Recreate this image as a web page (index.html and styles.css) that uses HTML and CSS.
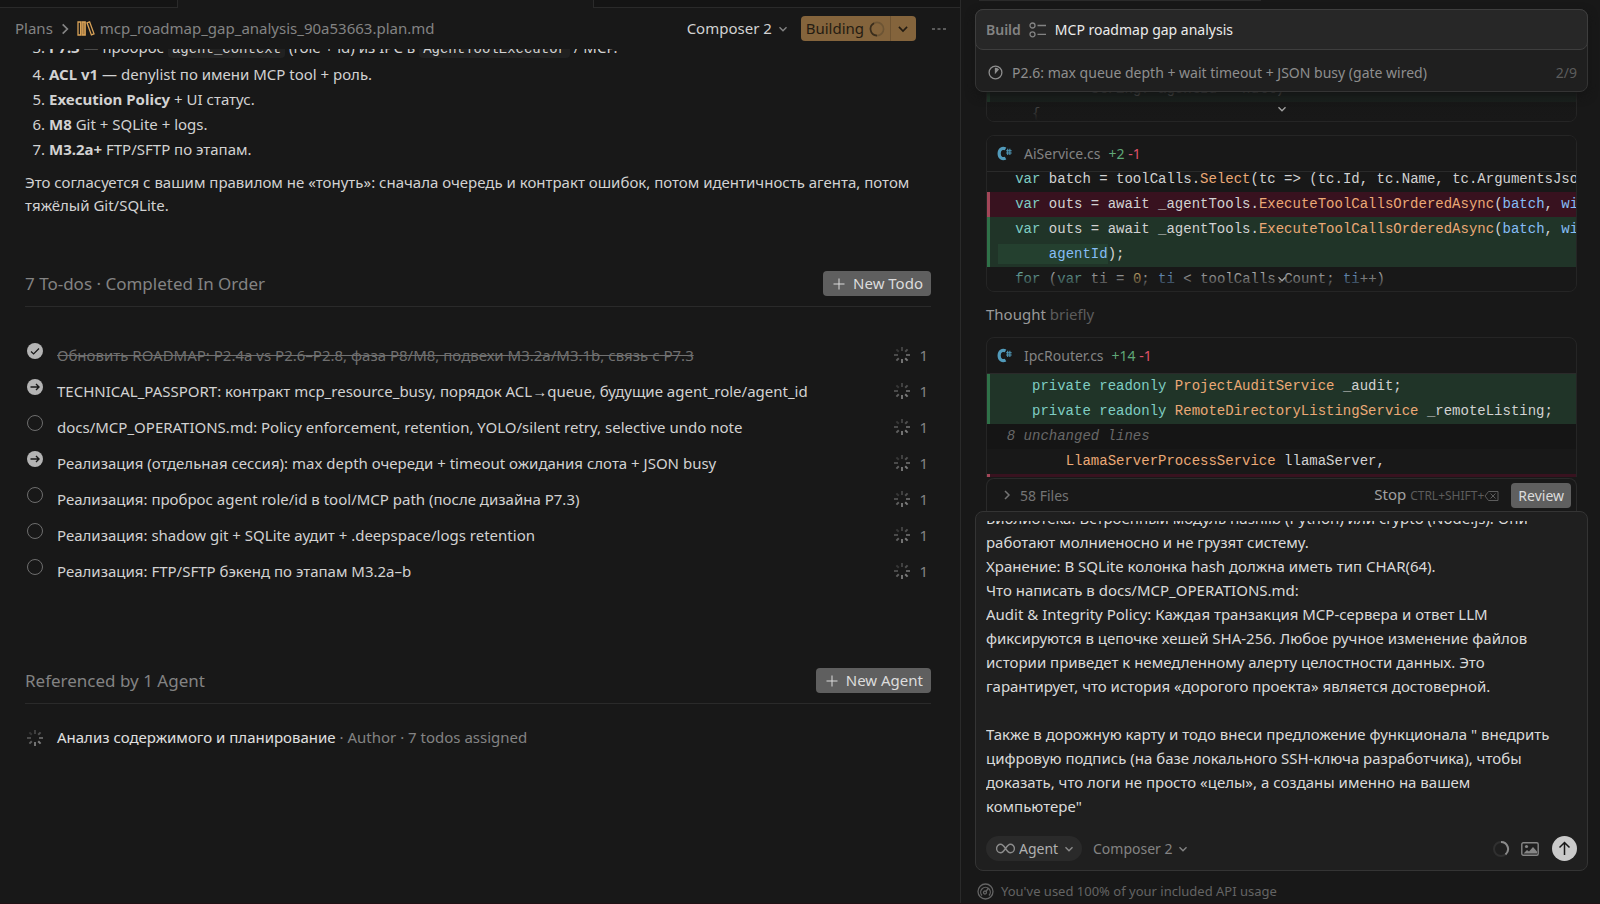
FILE: index.html
```html
<!DOCTYPE html>
<html lang="ru">
<head>
  <meta charset="UTF-8" />
  <meta name="viewport" content="width=device-width, initial-scale=1.0" />
  <title>mcp_roadmap_gap_analysis_90a53663.plan.md</title>
  <link rel="stylesheet" href="styles.css">
</head>
<body>
  <!-- shared icons -->
  <svg class="sprite" aria-hidden="true">
    <symbol id="chevron-down" viewBox="0 0 12 12"><path d="M2.500 4.200l3.500 3.500 3.500-3.500" fill="none" stroke="currentColor" stroke-width="1.4"/></symbol>
    <symbol id="chevron-right" viewBox="0 0 12 12"><path d="M4 2l4 4-4 4" fill="none" stroke="currentColor" stroke-width="1.5"/></symbol>
    <symbol id="plus" viewBox="0 0 12 12"><path d="M6 0.5v11M0.5 6h11" fill="none" stroke="currentColor"/></symbol>
    <symbol id="spinner" viewBox="0 0 16 16">
      <g stroke="currentColor" stroke-width="2">
        <path d="M8 0v4" opacity=".4"/>
        <path d="M13.6 2.4l-2.4 2.4" opacity=".55"/>
        <path d="M16 8h-4" opacity=".7"/>
        <path d="M13.6 13.6l-2.4-2.4"/>
        <path d="M8 16v-4" opacity=".9"/>
        <path d="M2.4 13.6l2.4-2.4" opacity=".7"/>
        <path d="M0 8h4" opacity=".5"/>
        <path d="M2.4 2.4l2.4 2.4" opacity=".3"/>
      </g>
    </symbol>
    <symbol id="csharp" viewBox="0 0 14 14">
      <path d="M8 2.7C5 1.200 2 3 2 7s3 5.800 6 4.300" fill="none" stroke="#519aba" stroke-width="3"/>
      <path d="M10 2.500v6M12 2.500v6M8.500 4.400h5.200M8.500 6.600h5.200" stroke="#519aba" stroke-width="1"/>
    </symbol>
    <symbol id="arrow" viewBox="0 0 16 16"><path d="M3.5 8h8.500M9 5l3 3-3 3" fill="none" stroke="#181818" stroke-width="1.4"/></symbol>
  </svg>

  <div class="app">
    <main class="editor">
      <div class="tabs">
        <div class="tab"></div>
        <div class="tab active"></div>
        <div class="tab rest"></div>
      </div>

      <header class="toolbar">
        <nav class="breadcrumb">
          <a href="#">Plans</a>
          <svg width="14" height="14"><use href="#chevron-right"/></svg>
          <svg class="books" width="18" height="15" viewBox="0 0 18 15" fill="none" stroke="#d9a257" stroke-width="1.3">
            <path d="M1 1h2.6v13H1z"/>
            <path d="M5 1h3.2v13H5z" fill="#a87c42"/>
            <path d="M10 1.8l2.6-.9 4.4 12-2.6 1z"/>
          </svg>
          <a href="#">mcp_roadmap_gap_analysis_90a53663.plan.md</a>
        </nav>
        <div class="toolbar-actions">
          <label class="picker light">
            <select aria-label="Model"><option>Composer 2</option></select>
            <svg width="12" height="12"><use href="#chevron-down"/></svg>
          </label>
          <div class="build-group">
            <button class="build">Building
              <svg width="16" height="16" viewBox="0 0 16 16" fill="none" stroke-width="1.6">
                <circle cx="8" cy="8" r="6.6" stroke="#6c5434"/>
                <path d="M8 14.600A6.600 6.600 0 0 1 5 2.200" stroke="#3a2d1c"/>
              </svg>
            </button>
            <button class="build-more" aria-label="Build options"><svg width="14" height="14"><use href="#chevron-down"/></svg></button>
          </div>
          <button class="dots" aria-label="More">
            <svg width="14" height="4" viewBox="0 0 14 4" fill="currentColor"><path d="M0 1h3v2H0zM5.500 1h3v2h-3zM11 1h3v2h-3z"/></svg>
          </button>
        </div>
      </header>

      <div class="plan">
        <ol class="steps" start="3">
          <li><b>P7.3</b> — проброс <code>agent_context</code> (role + id) из IPC в <code>AgentToolExecutor</code> / MCP.</li>
          <li><b>ACL v1</b> — denylist по имени MCP tool + роль.</li>
          <li><b>Execution Policy</b> + UI статус.</li>
          <li><b>M8</b> Git + SQLite + logs.</li>
          <li><b>M3.2a+</b> FTP/SFTP по этапам.</li>
        </ol>
        <p class="note">Это согласуется с вашим правилом не «тонуть»: сначала очередь и контракт ошибок, потом идентичность агента, потом тяжёлый Git/SQLite.</p>

        <section class="todos">
          <div class="section-head">
            <h2>7 To-dos · Completed In Order</h2>
            <button class="btn"><svg width="12" height="12"><use href="#plus"/></svg>New Todo</button>
          </div>
          <ul class="todo-list">
            <li class="done">
              <span class="check"><input type="checkbox" id="t1" checked><svg viewBox="0 0 16 16"><path d="M4 8.500l2.600 2.500L12 5.500" fill="none" stroke="#181818" stroke-width="1.2"/></svg></span>
              <label for="t1">Обновить ROADMAP: P2.4a vs P2.6–P2.8, фаза P8/M8, подвехи M3.2a/M3.1b, связь с P7.3</label>
              <svg class="spin"><use href="#spinner"/></svg><span>1</span>
            </li>
            <li class="doing">
              <span class="check"><input type="checkbox" id="t2"><svg><use href="#arrow"/></svg></span>
              <label for="t2">TECHNICAL_PASSPORT: контракт mcp_resource_busy, порядок ACL→queue, будущие agent_role/agent_id</label>
              <svg class="spin"><use href="#spinner"/></svg><span>1</span>
            </li>
            <li>
              <span class="check"><input type="checkbox" id="t3"></span>
              <label for="t3">docs/MCP_OPERATIONS.md: Policy enforcement, retention, YOLO/silent retry, selective undo note</label>
              <svg class="spin"><use href="#spinner"/></svg><span>1</span>
            </li>
            <li class="doing">
              <span class="check"><input type="checkbox" id="t4"><svg><use href="#arrow"/></svg></span>
              <label for="t4">Реализация (отдельная сессия): max depth очереди + timeout ожидания слота + JSON busy</label>
              <svg class="spin"><use href="#spinner"/></svg><span>1</span>
            </li>
            <li>
              <span class="check"><input type="checkbox" id="t5"></span>
              <label for="t5">Реализация: проброс agent role/id в tool/MCP path (после дизайна P7.3)</label>
              <svg class="spin"><use href="#spinner"/></svg><span>1</span>
            </li>
            <li>
              <span class="check"><input type="checkbox" id="t6"></span>
              <label for="t6">Реализация: shadow git + SQLite аудит + .deepspace/logs retention</label>
              <svg class="spin"><use href="#spinner"/></svg><span>1</span>
            </li>
            <li>
              <span class="check"><input type="checkbox" id="t7"></span>
              <label for="t7">Реализация: FTP/SFTP бэкенд по этапам M3.2a–b</label>
              <svg class="spin"><use href="#spinner"/></svg><span>1</span>
            </li>
          </ul>
        </section>

        <section class="agents">
          <div class="section-head">
            <h2>Referenced by 1 Agent</h2>
            <button class="btn"><svg width="12" height="12"><use href="#plus"/></svg>New Agent</button>
          </div>
          <div class="agent-row">
            <svg class="spin"><use href="#spinner"/></svg>
            <p><a href="#">Анализ содержимого и планирование</a> · Author · 7 todos assigned</p>
          </div>
        </section>
      </div>
    </main>

    <aside class="sidebar">
      <div class="prev-edge"></div>
      <div class="task-card">
        <div class="task-title">
          <b>Build</b>
          <svg width="18" height="16" viewBox="0 0 18 16" fill="none" stroke="currentColor" stroke-width="1.3">
            <circle cx="3.500" cy="3.500" r="2.500"/><circle cx="3.500" cy="12.300" r="2.500"/><path d="M8.500 3.500H17M8.500 12.300H17"/>
          </svg>
          <span>MCP roadmap gap analysis</span>
        </div>
        <div class="task-step">
          <svg width="15" height="15" viewBox="0 0 15 15" fill="none" stroke="currentColor" stroke-width="1.3">
            <circle cx="7.500" cy="7.500" r="6.400"/><path d="M7.500 7.500V3.500A4 4 0 0 1 10.100 4.500z" fill="currentColor"/>
          </svg>
          <span>P2.6: max queue depth + wait timeout + JSON busy (gate wired)</span>
          <span class="count">2/9</span>
        </div>
      </div>

      <div class="chat">
        <div class="diff tail">
          <div class="code">
            <div class="line add">            string? agentId = null)</div>
            <div class="line">     {</div>
          </div>
          <button class="expand" aria-label="Expand"><svg width="12" height="12"><use href="#chevron-down"/></svg></button>
        </div>

        <div class="diff ai-service">
          <div class="diff-head"><svg width="15" height="15"><use href="#csharp"/></svg>AiService.cs <span class="stat"><i class="plus">+2</i> <i class="minus">-1</i></span></div>
          <div class="code cut">
            <div class="line">   <i class="k">var</i> batch = toolCalls.<i class="f">Select</i>(tc =&gt; (tc.Id, tc.Name, tc.ArgumentsJson)).ToList();</div>
            <div class="line del">   <i class="k">var</i> outs = await _agentTools.<i class="f">ExecuteToolCallsOrderedAsync</i>(<i class="v">batch</i>, <i class="v">windowId</i>);</div>
            <div class="line add">   <i class="k">var</i> outs = await _agentTools.<i class="f">ExecuteToolCallsOrderedAsync</i>(<i class="v">batch</i>, <i class="v">windowId</i>,</div>
            <div class="line add"> <mark>      <i class="v">agentId</i></mark>);</div>
            <div class="line">   <i class="k">for</i> (<i class="k">var</i> ti = <i class="n">0</i>; <i class="v">ti</i> &lt; toolCalls.Count; <i class="v">ti</i>++)</div>
          </div>
          <button class="expand" aria-label="Expand"><svg width="12" height="12"><use href="#chevron-down"/></svg></button>
        </div>

        <p class="thought">Thought <span>briefly</span></p>

        <div class="diff">
          <div class="diff-head"><svg width="15" height="15"><use href="#csharp"/></svg>IpcRouter.cs <span class="stat"><i class="plus">+14</i> <i class="minus">-1</i></span></div>
          <div class="code">
            <div class="line add">     <i class="k">private readonly</i> <i class="f">ProjectAuditService</i> _audit;</div>
            <div class="line add">     <i class="k">private readonly</i> <i class="f">RemoteDirectoryListingService</i> _remoteListing;</div>
            <div class="line skip">  8 unchanged lines</div>
            <div class="line">         <i class="f">LlamaServerProcessService</i> llamaServer,</div>
            <div class="line del"></div>
          </div>
        </div>
      </div>

      <div class="files-bar">
        <button class="files"><svg width="12" height="12"><use href="#chevron-right"/></svg>58 Files</button>
        <button class="stop">Stop <kbd>CTRL+SHIFT+<svg width="15" height="12" viewBox="0 0 15 12" fill="none" stroke="currentColor"><path d="M4.500 1.500h9.500v9H4.500L1 6zM6.500 3.500l5 5M11.500 3.500l-5 5"/></svg></kbd></button>
        <button class="btn review">Review</button>
      </div>

      <form class="composer">
        <textarea id="prompt" aria-label="Prompt" spellcheck="false">Библиотека: Встроенный модуль hashlib (Python) или crypto (Node.js). Они
работают молниеносно и не грузят систему.
Хранение: В SQLite колонка hash должна иметь тип CHAR(64).
Что написать в docs/MCP_OPERATIONS.md:
Audit &amp; Integrity Policy: Каждая транзакция MCP-сервера и ответ LLM
фиксируются в цепочке хешей SHA-256. Любое ручное изменение файлов
истории приведет к немедленному алерту целостности данных. Это
гарантирует, что история «дорогого проекта» является достоверной.

Также в дорожную карту и тодо внеси предложение функционала " внедрить
цифровую подпись (на базе локального SSH-ключа разработчика), чтобы
доказать, что логи не просто «целы», а созданы именно на вашем
компьютере"</textarea>
        <div class="composer-bar">
          <label class="picker pill">
            <svg width="19" height="11" viewBox="0 0 19 11" fill="none" stroke="currentColor" stroke-width="1.4"><path d="M9.500 5.500C7.500 2.500 6.200 1.300 4.700 1.300a4.100 4.200 0 0 0 0 8.400C6.200 9.700 7.500 8.500 9.500 5.500s3.300-4.200 4.800-4.200a4.100 4.200 0 0 1 0 8.400C12.800 9.700 11.500 8.500 9.500 5.500z"/></svg>
            <select aria-label="Mode"><option>Agent</option></select>
            <svg width="12" height="12"><use href="#chevron-down"/></svg>
          </label>
          <label class="picker">
            <select aria-label="Model"><option>Composer 2</option></select>
            <svg width="12" height="12"><use href="#chevron-down"/></svg>
          </label>
          <svg class="context" width="18" height="18" viewBox="0 0 18 18" fill="none" stroke-width="2"><circle cx="9" cy="9" r="7" stroke="#303030"/><path d="M9 2a7 7 0 0 1 4.500 12.400" stroke="#8a8a8a"/></svg>
          <button type="button" class="icon-btn" aria-label="Attach image">
            <svg width="18" height="14" viewBox="0 0 18 14"><rect x=".8" y=".8" width="16.400" height="12.400" rx="1.500" fill="none" stroke="currentColor" stroke-width="1.400"/><circle cx="5.500" cy="4.500" r="1.600" fill="currentColor"/><path d="M2.500 11.500l3.500-3.500 2 1.500 4-4.500 4 4.500v2z" fill="currentColor"/></svg>
          </button>
          <button type="button" class="send" aria-label="Send">
            <svg width="15" height="15" viewBox="0 0 15 15" fill="none" stroke="#181818" stroke-width="1.500"><path d="M7.500 14V1.500M2.500 6.500l5-5 5 5"/></svg>
          </button>
        </div>
      </form>

      <div class="usage">
        <svg width="17" height="17" viewBox="0 0 17 17" fill="none" stroke="currentColor" stroke-width="1.300"><circle cx="8.500" cy="8.500" r="7.500"/><path d="M5 12.500a4.800 4.800 0 1 1 7 0"/><circle cx="8" cy="9.500" r="1.500"/><path d="M9 8.500l2.500-3.500"/></svg>
        You've used 100% of your included API usage
      </div>
    </aside>
  </div>

  <script>
    // keep the end of the draft in view
    const prompt = document.getElementById('prompt');
    prompt.scrollTop = prompt.scrollHeight;
  </script>
</body>
</html>
```
FILE: styles.css
```css
:root {
  --bg: #181818;
  --panel: #1f1f1f;
  --border: #2a2a2a;
  --text: #d2d2d2;
  --muted: #838383;
  --dim: #5c5c5c;
  --accent: #84643c;
  --add: #203428;
  --del: #38121f;
}

* {
  box-sizing: border-box;
}

body {
  margin: 0;
  background: var(--bg);
  color: var(--text);
  font-family: 'Noto Sans', 'Open Sans', sans-serif;
  font-size: 15px;
  line-height: 23px;
  overflow: hidden;
}

button, select, textarea {
  font: inherit;
  color: inherit;
  background: none;
  border: 0;
  padding: 0;
  margin: 0;
}

svg {
  flex: none;
}

a {
  color: inherit;
  text-decoration: none;
}

i {
  font-style: normal;
}

.sprite {
  display: none;
}

.app {
  display: grid;
  grid-template-columns: 3fr 2fr;
  height: 100vh;
  border-bottom: 1px solid #1f1114;
}

/* editor */
.editor {
  display: flex;
  flex-direction: column;
  min-width: 0;
  min-height: 0;
}

.tabs {
  display: flex;
  height: 8px;
}

.tab {
  width: 177px;
  background: #141414;
  border-bottom: 1px solid var(--border);
}

.tab.active {
  width: 417px;
  background: var(--bg);
  border: 1px solid var(--border);
  border-width: 0 1px;
}

.tab.rest {
  flex: 1;
}

.toolbar {
  display: flex;
  align-items: center;
  justify-content: space-between;
  height: 41px;
  padding: 0 14px 0 15px;
}

.breadcrumb {
  display: flex;
  align-items: center;
  gap: 5px;
  color: var(--muted);
}

.toolbar-actions {
  display: flex;
  align-items: center;
  color: var(--muted);
}

.picker {
  display: flex;
  align-items: center;
  gap: 4px;
  color: var(--muted);
}

.picker select {
  appearance: none;
}

.picker.light select {
  color: var(--text);
}

.build-group {
  display: flex;
  height: 25px;
  margin: 0 16px 0 12px;
  border-radius: 4px;
  background: var(--accent);
  color: #241c12;
}

.build {
  display: flex;
  align-items: center;
  gap: 5px;
  padding: 0 5px;
}

.build-more {
  display: flex;
  align-items: center;
  padding: 0 6px 0 5px;
  border-left: 1px solid #6f5432;
}

.dots {
  display: flex;
  color: #5a5a5a;
}

.plan {
  flex: 1;
  min-height: 0;
  overflow: hidden;
  padding: 0 29px 0 25px;
}

.steps {
  margin: -13px 0 10px;
  padding-left: 24px;
}

.steps li {
  height: 23px;
  margin-bottom: 2px;
}

.steps li:first-child {
  margin-bottom: 4px;
}

.steps code {
  padding: 1px 4px;
  border-radius: 4px;
  background: #212121;
  font-family: 'Liberation Mono', monospace;
  font-size: 14px;
}

.note {
  margin: 0;
}

.todos {
  margin-top: 54px;
}

.section-head {
  display: flex;
  justify-content: space-between;
  align-items: flex-start;
  height: 36px;
  border-bottom: 1px solid var(--border);
}

.section-head h2 {
  margin: 0;
  font-size: 17px;
  line-height: 25px;
  font-weight: 400;
  color: var(--muted);
}

.btn {
  display: flex;
  align-items: center;
  gap: 8px;
  height: 25px;
  padding: 0 8px 0 10px;
  border-radius: 4px;
  background: #5f5f5f;
  color: #dcdcdc;
}

.todo-list {
  list-style: none;
  margin: 30px 0 0;
  padding: 0;
}

.todo-list li {
  display: flex;
  align-items: center;
  height: 36px;
  padding: 0 3px 0 2px;
  color: var(--muted);
}

.todo-list label {
  flex: 1;
  margin-left: 14px;
  color: var(--text);
}

.todo-list .done label {
  color: #707070;
  text-decoration: line-through;
}

.check {
  display: grid;
  height: 25px;
}

.check input,
.check svg {
  grid-area: 1 / 1;
  width: 16px;
  height: 16px;
  margin: 0;
}

.check svg {
  pointer-events: none;
}

.check input {
  appearance: none;
  border: 1px solid #6e6e6e;
  border-radius: 50%;
}

.done input,
.doing input {
  border: 0;
  background: #b4b4b4;
}

.spin {
  width: 16px;
  height: 16px;
  margin-right: 9px;
  color: #7c7c7c;
}

.agents {
  margin-top: 79px;
}

.agent-row {
  display: flex;
  align-items: center;
  gap: 5px;
  margin-top: 22px;
  padding-left: 2px;
  color: var(--muted);
}

.agent-row p {
  margin: 0;
}

.agent-row a {
  color: #e0e0e0;
}

/* chat sidebar */
.sidebar {
  display: flex;
  flex-direction: column;
  min-width: 0;
  min-height: 0;
  padding: 0 12px 0 14px;
  border-left: 1px solid var(--border);
  font-size: 14px;
}

.prev-edge {
  width: 46%;
  height: 9px;
  margin-left: 4px;
  border-top: 1px solid var(--border);
}

.task-card {
  border: 1px solid #343434;
  border-radius: 8px;
  background: var(--panel);
  box-shadow: 0 4px 10px #141414;
  z-index: 1;
}

.task-title,
.task-step {
  display: flex;
  align-items: center;
  height: 41px;
  padding: 0 10px;
}

.task-title {
  gap: 8px;
  margin: -1px -1px 0;
  border: 1px solid #3e3e3e;
  border-radius: 8px;
  background: #272727;
  color: #ececec;
}

.task-title b,
.task-title svg {
  color: var(--muted);
  font-weight: 600;
}

.task-step {
  gap: 9px;
  padding: 3px 10px 0 12px;
  color: #8e8e8e;
}

.task-step .count {
  margin-left: auto;
  color: var(--dim);
}

.chat {
  flex: 1;
  min-height: 0;
  overflow: hidden;
  padding: 0 11px;
}

.diff {
  position: relative;
  border: 1px solid #252525;
  border-radius: 8px;
  overflow: hidden;
}

.diff-head {
  display: flex;
  align-items: center;
  height: 36px;
  padding-left: 10px;
  border-bottom: 1px solid var(--border);
  color: var(--muted);
}

.diff-head svg {
  margin-right: 12px;
}

.stat {
  margin-left: 8px;
}

.plus {
  color: #5fa777;
}

.minus {
  color: #e0526a;
}

.code {
  font-family: 'Liberation Mono', monospace;
  font-size: 14px;
  line-height: 25px;
}

.line {
  height: 25px;
  border-left: 3px solid transparent;
  white-space: pre;
}

.line.add {
  background: var(--add);
  border-left-color: #2f7148;
}

.line.del {
  background: var(--del);
  border-left-color: #a24658;
}

.line.skip {
  background: #151515;
  color: #686868;
  font-style: italic;
}

.line mark {
  padding: 2px 0;
  background: #24402f;
  color: inherit;
}

.k { color: #7fcdc3; }
.f { color: #eba976; }
.v { color: #86bdf5; }
.n { color: #e6c27a; }

.cut {
  margin-top: -5px;
}

.ai-service .diff-head {
  position: relative;
  background: var(--bg);
}

.ai-service {
  height: 157px;
}

.tail {
  height: 46px;
  margin: -16px 0 13px;
}

.tail .code {
  opacity: 0.4;
}

/* fades the last line out and holds the chevron */
.expand {
  position: absolute;
  left: 0;
  right: 0;
  bottom: 0;
  height: 24px;
  background: linear-gradient(transparent, var(--bg));
  color: #a0a0a0;
}

.thought {
  margin: 11px 0 11px;
  font-size: 15px;
  color: #9a9a9a;
}

.thought span {
  color: var(--dim);
}

.files-bar {
  display: flex;
  align-items: center;
  height: 33px;
  margin: 1px 11px 0;
  padding: 0 5px 0 14px;
  border: 1px solid var(--border);
  border-bottom: 0;
  border-radius: 8px 8px 0 0;
  color: #747474;
}

.files {
  display: flex;
  align-items: center;
  gap: 7px;
}

.stop {
  margin: 0 12px 0 auto;
  font-size: 15px;
  color: #a0a0a0;
}

.stop kbd {
  font-family: inherit;
  font-size: 12px;
  color: var(--dim);
}

.stop svg {
  vertical-align: -2px;
}

.btn.review {
  padding: 0 7px;
}

.composer {
  display: flex;
  flex-direction: column;
  padding: 9px 10px 6px;
  border: 1px solid #343434;
  border-radius: 8px;
  background: var(--panel);
}

.composer textarea {
  height: 297px;
  font-size: 15px;
  line-height: 24px;
  color: #dadada;
  resize: none;
  outline: 0;
  overflow: hidden;
}

.composer-bar {
  display: flex;
  align-items: center;
  gap: 11px;
  height: 31px;
  margin-top: 15px;
}

.pill {
  height: 25px;
  padding: 0 7px 0 10px;
  border-radius: 13px;
  background: #2a2a2a;
  color: #8c8c8c;
}

.pill select {
  color: #b0b0b0;
}

.composer-bar .context {
  margin-left: auto;
}

.icon-btn {
  display: flex;
  margin-right: 2px;
  color: #868686;
}

.send {
  display: flex;
  align-items: center;
  justify-content: center;
  width: 25px;
  height: 25px;
  border-radius: 50%;
  background: #cacaca;
}

.usage {
  display: flex;
  align-items: center;
  gap: 7px;
  height: 31px;
  margin-top: 1px;
  padding: 8px 2px 0;
  font-size: 13px;
  color: #646464;
}
```
